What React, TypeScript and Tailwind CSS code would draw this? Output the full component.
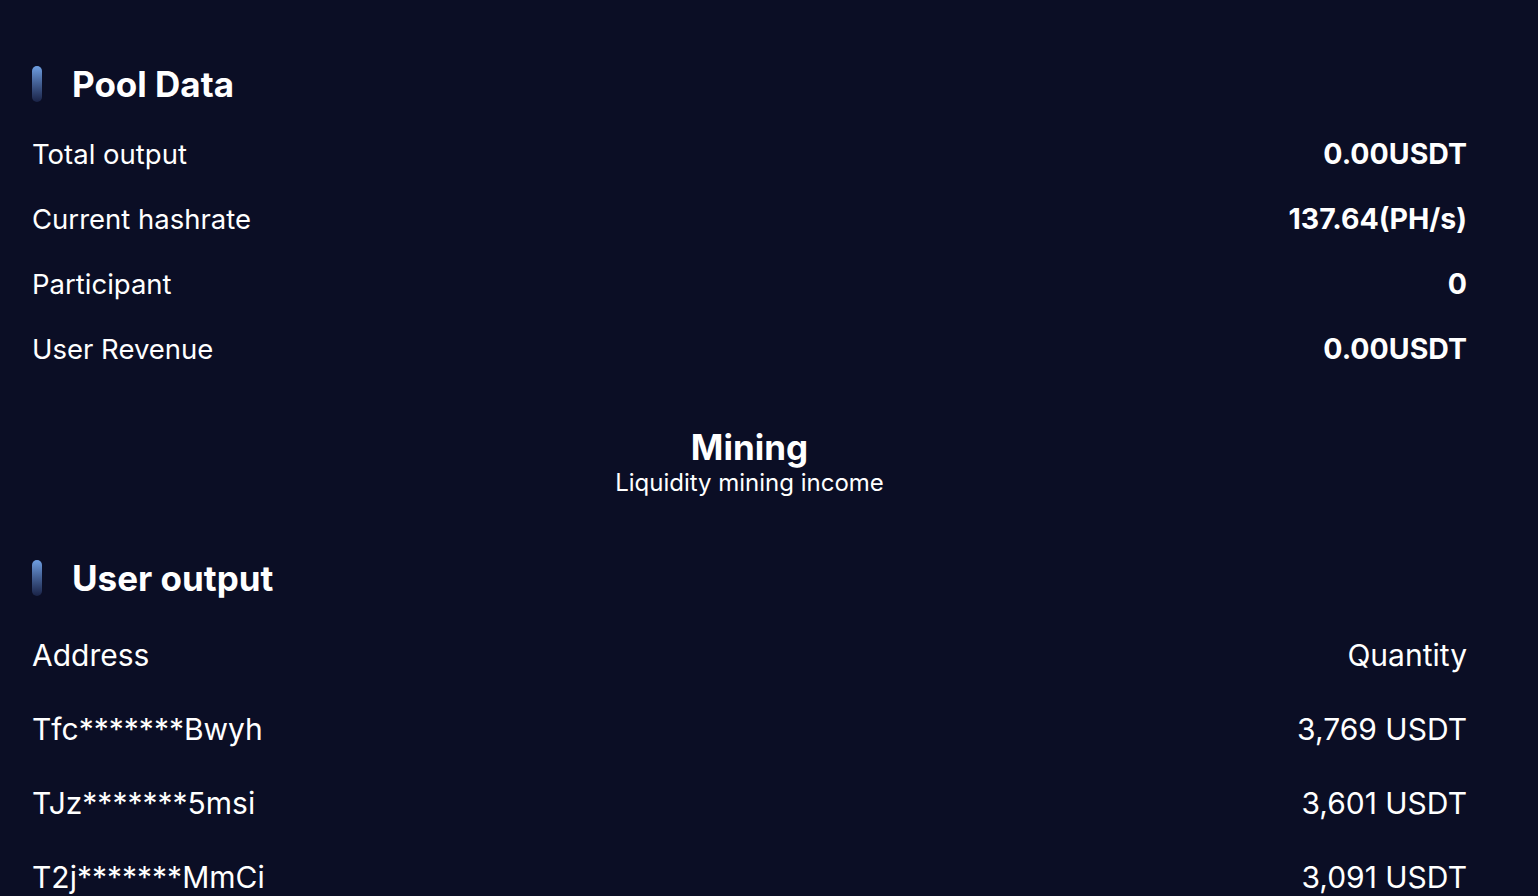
import React from 'react'

const poolRows = [
  { label: 'Total output', value: '0.00USDT' },
  { label: 'Current hashrate', value: '137.64(PH/s)' },
  { label: 'Participant', value: '0' },
  { label: 'User Revenue', value: '0.00USDT' },
]

const outputs = [
  { address: 'Tfc*******Bwyh', qty: '3,769 USDT' },
  { address: 'TJz*******5msi', qty: '3,601 USDT' },
  { address: 'T2j*******MmCi', qty: '3,091 USDT' },
]

function SectionTitle({ children }: { children: React.ReactNode }) {
  return (
    <div className="flex items-center gap-[30px] h-[36px]">
      <span className="block w-[10px] h-[36px] rounded-full bg-gradient-to-b from-[#6f9fe3] to-[#1a2347]" />
      <h2 className="text-[35px] font-bold text-white leading-none">{children}</h2>
    </div>
  )
}

export default function App() {
  return (
    <div
      className="min-h-screen h-[896px] overflow-hidden bg-[#0b0e25] text-white"
      style={{ fontFamily: 'Inter, "Noto Sans", sans-serif' }}
    >
      <div className="ml-8 w-[1435px] pt-[66px]">
        <SectionTitle>Pool Data</SectionTitle>

        {/* Pool stats */}
        <div className="mt-[20px] flex flex-col">
          {poolRows.map((r) => (
            <div key={r.label} className="flex items-center justify-between h-[65px]">
              <span className="text-[27.5px]">{r.label}</span>
              <span className="text-[28.5px] font-bold">{r.value}</span>
            </div>
          ))}
        </div>

        {/* Mining */}
        <div className="mt-[45px] flex flex-col items-center">
          <p className="text-[35px] font-bold leading-[40px]">Mining</p>
          <p className="text-[24px] leading-[32px]">Liquidity mining income</p>
        </div>

        <div className="mt-[61px]">
          <SectionTitle>User output</SectionTitle>
        </div>

        <div className="mt-[22px] flex flex-col">
          <div className="flex items-center justify-between h-[74px] text-[30px]">
            <span>Address</span>
            <span>Quantity</span>
          </div>
          {outputs.map((o) => (
            <div key={o.address} className="flex items-center justify-between h-[74px] text-[30px]">
              <span>{o.address}</span>
              <span>{o.qty}</span>
            </div>
          ))}
        </div>
      </div>
    </div>
  )
}
